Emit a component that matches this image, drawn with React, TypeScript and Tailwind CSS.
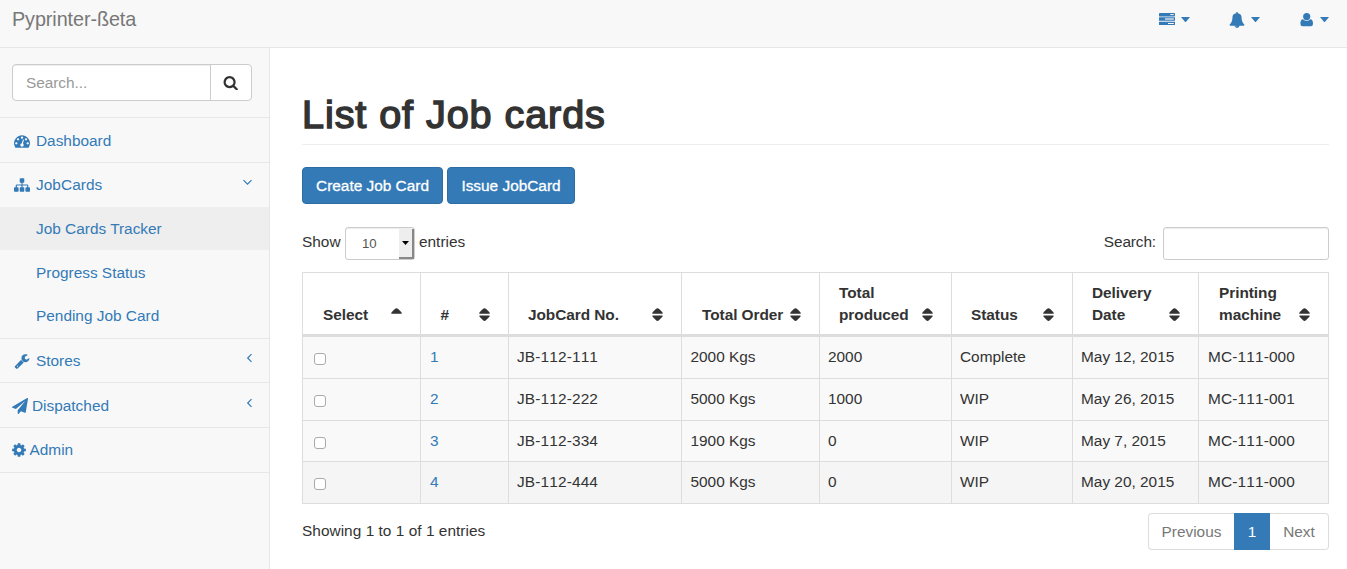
import React from 'react';

const paths = {
  search:
    'M1216 832q0-185-131.5-316.5t-316.5-131.5-316.5 131.5-131.5 316.5 131.5 316.5 316.5 131.5 316.5-131.5 131.5-316.5zm512 832q0 52-38 90t-90 38q-54 0-90-38l-343-342q-179 124-399 124-143 0-273.5-55.5t-225-150-150-225-55.5-273.5 55.5-273.5 150-225 225-150 273.5-55.5 273.5 55.5 225 150 150 225 55.5 273.5q0 220-124 399l343 343q37 37 37 90z',
  bell:
    'M912 1696q0-16-16-16-59 0-101.5-42.5t-42.5-101.5q0-16-16-16t-16 16q0 73 51.5 124.5t124.5 51.5q16 0 16-16zm816-288q0 52-38 90t-90 38h-448q0 106-75 181t-181 75-181-75-75-181h-448q-52 0-90-38t-38-90q50-42 91-88t85-119.5 74.5-158.5 50-206 19.5-260q0-152 117-282.5t307-158.5q-8-19-8-39 0-40 28-68t68-28 68 28 28 68q0 20-8 39 190 28 307 158.5t117 282.5q0 139 19.5 260t50 206 74.5 158.5 85 119.5 91 88z',
  dashboard:
    'M384 1152q0-53-37.5-90.5t-90.5-37.5-90.5 37.5-37.5 90.5 37.5 90.5 90.5 37.5 90.5-37.5 37.5-90.5zm192-448q0-53-37.5-90.5t-90.5-37.5-90.5 37.5-37.5 90.5 37.5 90.5 90.5 37.5 90.5-37.5 37.5-90.5zm428 481l101-382q6-26-7.5-48.5t-38.5-29.5-48 6.5-30 39.5l-101 382q-60 5-107 43.5t-63 98.5q-20 77 20 146t117 89 146-20 89-117q16-60-6-117t-72-91zm660-33q0-53-37.5-90.5t-90.5-37.5-90.5 37.5-37.5 90.5 37.5 90.5 90.5 37.5 90.5-37.5 37.5-90.5zm-640-640q0-53-37.5-90.5t-90.5-37.5-90.5 37.5-37.5 90.5 37.5 90.5 90.5 37.5 90.5-37.5 37.5-90.5zm448 192q0-53-37.5-90.5t-90.5-37.5-90.5 37.5-37.5 90.5 37.5 90.5 90.5 37.5 90.5-37.5 37.5-90.5zm320 448q0 261-141 483-19 29-54 29h-1402q-35 0-54-29-141-221-141-483 0-182 71-348t191-286 286-191 348-71 348 71 286 191 191 286 71 348z',
  sitemap:
    'M1792 1248v320q0 40-28 68t-68 28h-320q-40 0-68-28t-28-68v-320q0-40 28-68t68-28h96v-192h-512v192h96q40 0 68 28t28 68v320q0 40-28 68t-68 28h-320q-40 0-68-28t-28-68v-320q0-40 28-68t68-28h96v-192h-512v192h96q40 0 68 28t28 68v320q0 40-28 68t-68 28h-320q-40 0-68-28t-28-68v-320q0-40 28-68t68-28h96v-192q0-52 38-90t90-38h512v-192h-96q-40 0-68-28t-28-68v-320q0-40 28-68t68-28h320q40 0 68 28t28 68v320q0 40-28 68t-68 28h-96v192h512q52 0 90 38t38 90v192h96q40 0 68 28t28 68z',
  wrench:
    'M448 1472q0-26-19-45t-45-19-45 19-19 45 19 45 45 19 45-19 19-45zm644-420l-682 682q-37 37-90 37-52 0-91-37l-106-108q-38-36-38-90 0-53 38-91l681-681q39 98 114.5 173.5t173.5 114.5zm634-435q0 39-23 106-47 134-164.5 217.5t-258.5 83.5q-185 0-316.5-131.5t-131.5-316.5 131.5-316.5 316.5-131.5q58 0 121.5 16.5t107.5 46.5q16 11 16 28t-16 28l-293 169v224l193 107q5-3 79-48.5t135.5-81 70.5-35.5q15 0 23.5 10t8.5 25z',
  plane:
    'M1764 11q33 24 27 64l-256 1536q-5 29-32 45-14 8-31 8-11 0-24-5l-453-185-242 295q-18 23-49 23-13 0-22-4-19-7-30.5-23.5t-11.5-36.5v-349l864-1059-1069 925-395-162q-37-14-40-55-2-40 32-59l1664-960q15-9 32-9 20 0 36 11z',
  cog:
    'M1152 896q0-106-75-181t-181-75-181 75-75 181 75 181 181 75 181-75 75-181zm512-109v222q0 12-8 23t-20 13l-185 28q-19 54-39 91 35 50 107 138 10 12 10 25t-9 23q-27 37-99 108t-94 71q-12 0-26-9l-138-108q-44 23-91 38-16 136-29 186-7 28-36 28h-222q-14 0-24.5-8.5t-11.5-21.5l-28-184q-49-16-90-37l-141 107q-10 9-25 9-14 0-25-11-126-114-165-168-7-10-7-23 0-12 8-23 15-21 51-66.5t54-70.5q-27-50-41-99l-183-27q-13-2-21-12.5t-8-23.5v-222q0-12 8-23t19-13l186-28q14-46 39-92-40-57-107-138-10-12-10-24 0-10 9-23 26-36 98.5-107.5t94.5-71.5q13 0 26 10l138 107q44-23 91-38 16-136 29-186 7-28 36-28h222q14 0 24.5 8.5t11.5 21.5l28 184q49 16 90 37l142-107q9-9 24-9 13 0 25 10 129 119 165 170 7 8 7 22 0 12-8 23-15 21-51 66.5t-54 70.5q26 50 41 98l183 28q13 2 21 12.5t8 23.5z',
};

type IconName = keyof typeof paths;

function Icon({ name, className = 'size-4' }: { name: IconName; className?: string }) {
  return (
    <svg viewBox="0 0 1792 1792" fill="currentColor" className={`shrink-0 ${className}`}>
      <path d={paths[name]} />
    </svg>
  );
}

function TasksIcon() {
  return (
    <svg viewBox="0 0 16 16" fill="currentColor" className="size-4 shrink-0">
      <rect x="0" y="1" width="16" height="3.4" rx="0.4" />
      <rect x="0" y="5.3" width="16" height="3.5" rx="0.4" />
      <rect x="0" y="9.7" width="16" height="3.4" rx="0.4" />
      <g fill="#f8f8f8">
        <rect x="11.3" y="2.1" width="3.5" height="1" />
        <rect x="6" y="6" width="8.8" height="2" fillOpacity="0.6" />
        <rect x="9" y="11" width="5.8" height="1" />
      </g>
    </svg>
  );
}

function UserIcon() {
  return (
    <svg viewBox="0 0 16 16" fill="currentColor" className="size-4 shrink-0">
      <circle cx="8.7" cy="4.6" r="3.6" />
      <path d="M5 7.2Q6.6 8.9 8.7 8.9T12.4 7.2Q15 7.4 15 11.7Q15 14.2 12.8 14.2H4.6Q2.4 14.2 2.4 11.7Q2.4 7.4 5 7.2z" />
    </svg>
  );
}

function NavDropdown({ children }: { children: React.ReactNode }) {
  return (
    <button className="flex items-center text-[#337ab7]">
      {children}
      <svg viewBox="0 0 10 6" fill="currentColor" className="ml-1.5 h-[5.5px] w-[9px]">
        <path d="M0 0h10L5 6z" />
      </svg>
    </button>
  );
}

function Chevron({ open = false }: { open?: boolean }) {
  return (
    <svg viewBox="0 0 10 10" fill="none" stroke="currentColor" strokeWidth="1.2" className="mb-[5px] ml-auto size-[10px]">
      <path d={open ? 'M1.5 2.2l4 4 4-4' : 'M7.5 1.2L3.7 5l3.8 3.8'} />
    </svg>
  );
}

function SortIcon({ asc = false }: { asc?: boolean }) {
  return (
    <svg viewBox="0 0 11 14" fill="#333" className="mb-[4px] h-[14px] w-[11px] shrink-0">
      <path d="M5.5 0.2Q6.3 0.2 7.2 1L10.4 4.3Q11.2 5.7 10 5.7H1Q-.2 5.7 .6 4.3L3.8 1Q4.7 .2 5.5 .2z" />
      {!asc && <path d="M5.5 12.9Q6.3 12.9 7.2 12L10.4 8.7Q11.2 7.4 10 7.4H1Q-.2 7.4 .6 8.7L3.8 12Q4.7 12.9 5.5 12.9z" />}
    </svg>
  );
}

const columns = [
  { lines: ['Select'], width: 'w-[118px]', pad: 'pl-5 pr-[18px]', asc: true },
  { lines: ['#'], width: 'w-[88px]', pad: 'pl-[19.5px] pr-[18px]' },
  { lines: ['JobCard No.'], width: 'w-[173px]', pad: 'pl-[19px] pr-[18px]' },
  { lines: ['Total Order'], width: 'w-[138px]', pad: 'pl-5 pr-[18px]' },
  { lines: ['Total', 'produced'], width: 'w-[132px]', pad: 'pl-[19px] pr-[18.5px]' },
  { lines: ['Status'], width: 'w-[121px]', pad: 'pl-[19px] pr-[18.5px]' },
  { lines: ['Delivery', 'Date'], width: 'w-[126px]', pad: 'pl-[19px] pr-[18px]' },
  { lines: ['Printing', 'machine'], width: 'w-[130px]', pad: 'pl-5 pr-[18px]' },
];

const rows = [
  { h: 'h-[42px]', pb: 'pb-[2px]', cells: ['JB-112-111', '2000 Kgs', '2000', 'Complete', 'May 12, 2015', 'MC-111-000'] },
  { h: 'h-[42px]', pb: 'pb-[2px]', cells: ['JB-112-222', '5000 Kgs', '1000', 'WIP', 'May 26, 2015', 'MC-111-001'] },
  { h: 'h-[41px]', pb: 'pb-0', cells: ['JB-112-334', '1900 Kgs', '0', 'WIP', 'May 7, 2015', 'MC-111-000'] },
  { h: 'h-[42px]', pb: 'pb-[2px]', cells: ['JB-112-444', '5000 Kgs', '0', 'WIP', 'May 20, 2015', 'MC-111-000'] },
];

function Sidebar() {
  const item = 'flex items-center border-b border-[#e7e7e7]';
  return (
    <aside className="w-[270px] shrink-0 border-r border-[#e7e7e7] bg-[#f8f8f8] text-[#337ab7]">
      <div className="h-[70px] border-b border-[#e7e7e7] pt-4 pl-3">
        <div className="flex h-[37px] w-[240px] overflow-hidden rounded-[4px] border border-[#ccc] bg-white">
          <input
            placeholder="Search..."
            className="w-[198px] border-r border-[#ccc] pl-[13px] tracking-[-0.05px] shadow-[inset_0_1px_1px_rgba(0,0,0,0.075)] outline-none placeholder:text-[#999]"
          />
          <button className="flex flex-1 items-center justify-center text-[#333]">
            <Icon name="search" className="size-[15.4px]" />
          </button>
        </div>
      </div>
      <nav>
        <a className={`${item} h-[45px] pt-px pl-[14px]`}>
          <Icon name="dashboard" />
          <span className="ml-1.5">Dashboard</span>
        </a>
        <a className="flex h-11 items-center pr-[17px] pl-[14px]">
          <Icon name="sitemap" />
          <span className="ml-1.5 tracking-[0.05px]">JobCards</span>
          <Chevron open />
        </a>
        <div className="border-b border-[#e7e7e7]">
          <a className="flex h-[43px] items-center bg-[#eee] pl-9">Job Cards Tracker</a>
          <a className="flex h-11 items-center pt-[2px] pl-9">Progress Status</a>
          <a className="flex h-11 items-center pl-9">Pending Job Card</a>
        </div>
        <a className={`${item} h-11 pr-[15px] pl-[14px]`}>
          <Icon name="wrench" />
          <span className="ml-1.5">Stores</span>
          <Chevron />
        </a>
        <a className={`${item} h-[45px] pt-px pr-[15px] pl-3`}>
          <Icon name="plane" />
          <span className="ml-1">Dispatched</span>
          <Chevron />
        </a>
        <a className={`${item} h-[45px] pl-[11px]`}>
          <Icon name="cog" />
          <span className="ml-[2.5px]">Admin</span>
        </a>
      </nav>
    </aside>
  );
}

function JobTable() {
  return (
    <table className="w-[1027px] table-fixed border-separate border-spacing-0 border-t border-l border-[#ddd]">
      <colgroup>
        {columns.map((c, i) => (
          <col key={i} className={c.width} />
        ))}
      </colgroup>
      <thead>
        <tr className="h-16">
          {columns.map((c, i) => (
            <th key={i} className={`${c.pad} border-r border-b-[3px] border-[#ddd] pt-0 pb-2 text-left align-bottom font-bold tracking-[-0.05px]`}>
              <div className="flex items-end justify-between whitespace-nowrap">
                <span>
                  {c.lines.map((l) => (
                    <span key={l} className="block">{l}</span>
                  ))}
                </span>
                <SortIcon asc={c.asc} />
              </div>
            </th>
          ))}
        </tr>
      </thead>
      <tbody className="[font-kerning:none]">
        {rows.map((r, i) => (
          <tr key={i} className={`${r.h} ${i === 3 ? 'bg-[#f5f5f5]' : 'bg-[#f9f9f9]'}`}>
            <td className="border-r border-b border-[#ddd] p-0 pl-[11px]">
              <input
                type="checkbox"
                className="mt-[3px] block size-3 appearance-none rounded-[3px] border border-[#aaa] bg-white"
              />
            </td>
            <td className={`${r.pb} border-r border-b border-[#ddd] pl-[9px] text-[#337ab7]`}>{i + 1}</td>
            {r.cells.map((c, j) => (
              <td
                key={j}
                className={`${r.pb} border-r border-b border-[#ddd] whitespace-nowrap ${
                  j === 0 ? 'pl-2 tracking-[0.15px]' : j === 5 ? 'pl-[9px] tracking-[0.15px]' : j === 1 ? 'pl-[8.5px]' : 'pl-2'
                }`}
              >
                {c}
              </td>
            ))}
          </tr>
        ))}
      </tbody>
    </table>
  );
}

export default function App() {
  return (
    <div className="flex h-[569px] w-[1347px] flex-col overflow-hidden bg-white font-['Liberation_Sans',Arial,sans-serif] text-[15.4px] leading-[22px] text-[#333]">
      <header className="flex h-12 shrink-0 items-center justify-between border-b border-[#e7e7e7] bg-[#f8f8f8] pr-[18px] pb-2 pl-3">
        <span className="pb-[2px] text-[19.8px] tracking-[-0.08px] text-[#777]">Pyprinter-ßeta</span>
        <div className="flex gap-[38.5px]">
          <NavDropdown><TasksIcon /></NavDropdown>
          <NavDropdown><Icon name="bell" /></NavDropdown>
          <NavDropdown><UserIcon /></NavDropdown>
        </div>
      </header>
      <div className="flex min-h-0 flex-1">
        <Sidebar />
        <main className="flex-1 pr-[18px] pl-8">
          <h1 className="flex h-[97px] items-end border-b border-[#eee] pb-2 text-[39.6px] leading-[44px] tracking-[0.92px] [-webkit-text-stroke:1.5px_#333]">
            List of Job cards
          </h1>
          <div className="mt-[22px] flex gap-1">
            <button className="h-[37px] w-[141px] rounded-[4px] border border-[#2e6da4] bg-[#337ab7] text-white [-webkit-text-stroke:0.3px_white]">
              Create Job Card
            </button>
            <button className="h-[37px] w-[128px] rounded-[4px] border border-[#2e6da4] bg-[#337ab7] text-white [-webkit-text-stroke:0.3px_white]">
              Issue JobCard
            </button>
          </div>
          <div className="mt-[23px] flex h-[45px] items-start justify-between">
            <div className="flex">
              <span className="mt-1 w-[43px]">Show</span>
              <div className="flex h-[33px] w-[70px] rounded-[3px] border border-[#ccc] bg-white text-[13.2px] text-[#555] shadow-[inset_0_1px_1px_rgba(0,0,0,0.075)]">
                <span className="flex-1 pt-[5px] pl-4">10</span>
                <span className="mt-px flex h-[30px] w-[15px] items-center justify-center border-r-2 border-b-2 border-[#888] bg-[#eee]">
                  <svg viewBox="0 0 7 4" className="h-1 w-[7px]">
                    <path d="M0 0h7L3.5 4z" />
                  </svg>
                </span>
              </div>
              <span className="mt-1 ml-1">entries</span>
            </div>
            <label className="flex">
              <span className="mt-1 mr-[7px] tracking-[-0.12px]">Search:</span>
              <input className="h-[33px] w-[166px] rounded-[3px] border border-[#ccc] bg-white shadow-[inset_0_1px_1px_rgba(0,0,0,0.075)]" />
            </label>
          </div>
          <JobTable />
          <div className="flex items-start justify-between pt-[9px]">
            <span className="mt-[7px] tracking-[0.04px]">Showing 1 to 1 of 1 entries</span>
            <div className="flex h-[37px] w-[181px] text-[#777]">
              <span className="flex w-[86px] items-center justify-center rounded-l-[4px] border border-r-0 border-[#ddd]">Previous</span>
              <span className="flex w-9 items-center justify-center bg-[#337ab7] text-white">1</span>
              <span className="flex flex-1 items-center justify-center rounded-r-[4px] border border-l-0 border-[#ddd]">Next</span>
            </div>
          </div>
        </main>
      </div>
    </div>
  );
}
